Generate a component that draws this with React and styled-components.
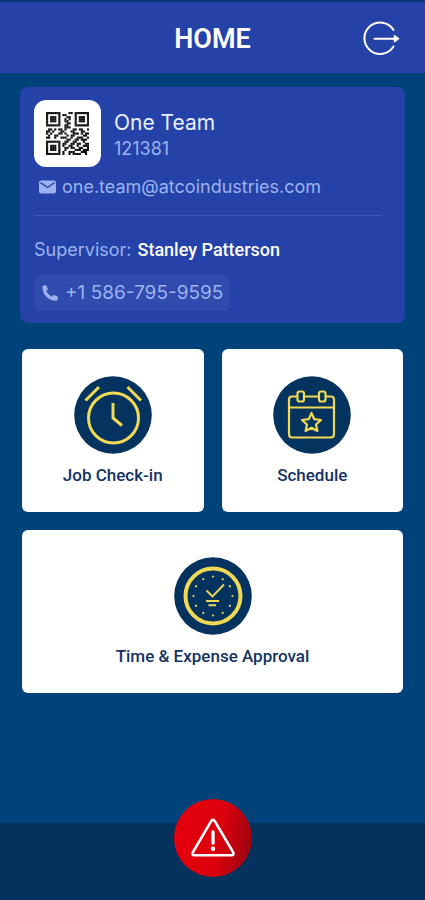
import React from "react";
import styled, { createGlobalStyle } from "styled-components";

const color = {
  page: "#00437b",
  panel: "#2442a8",
  navy: "#04335f",
  footer: "#03325d",
  yellow: "#f0da55",
  muted: "#9db2f0",
};

const GlobalStyle = createGlobalStyle`
  *, *::before, *::after { box-sizing: border-box; }
  body { margin: 0; background: ${color.page}; font-family: Roboto, "Liberation Sans", sans-serif; }
  button { font: inherit; color: inherit; border: 0; padding: 0; cursor: pointer; }
  h1, h2, p { margin: 0; font-weight: inherit; }
`;

const Screen = styled.div`
  min-height: 100vh;
  display: flex;
  flex-direction: column;
  background: ${color.page};
  border-top: 2px solid #053a78;
`;

const Header = styled.header`
  height: 71px;
  padding: 2px 24px 0;
  display: grid;
  grid-template-columns: 40px 1fr 40px;
  align-items: center;
  background: ${color.panel};
  color: #fff;
`;

const Title = styled.h1`
  grid-column: 2;
  text-align: center;
  font-size: 27px;
  line-height: 32px;
  && { font-weight: 600; }
`;

const IconButton = styled.button`
  width: 40px;
  height: 40px;
  background: none;
  svg { display: block; }
`;

const Main = styled.main`
  flex: 1;
  padding: 14px 20px 40px;
  display: flex;
  flex-direction: column;
  gap: 26px;
`;

const Profile = styled.section`
  padding: 13px 13px 12px 14px;
  border-radius: 8px;
  background: ${color.panel};
  color: ${color.muted};
  font-family: Inter, sans-serif;
`;

const Identity = styled.div`
  display: flex;
  gap: 13px;
`;

const QrTile = styled.div`
  width: 67px;
  height: 67px;
  display: grid;
  place-items: center;
  border-radius: 12px;
  background: #fff;
`;

const Names = styled.div`
  padding-top: 9px;
`;

const Name = styled.h2`
  color: #eaf0ff;
  font-size: 21px;
  line-height: 28px;
`;

const BadgeNumber = styled.p`
  font-size: 18px;
  line-height: 24px;
`;

const ContactLink = styled.a`
  display: inline-flex;
  align-items: center;
  color: inherit;
  text-decoration: none;
  font-size: 18px;
  line-height: 24px;
`;

const EmailLink = styled(ContactLink)`
  gap: 5px;
  margin: 8px 4px 0;
`;

const PhoneLink = styled(ContactLink)`
  gap: 6px;
  height: 36px;
  padding: 0 7px;
  border-radius: 6px;
  background: #2f4bae;
  font-size: 19px;
`;

const Divider = styled.hr`
  margin: 16px 10px 20px 0;
  border: 0;
  border-top: 1px solid #3a57b9;
`;

const Supervisor = styled.p`
  display: flex;
  gap: 6px;
  margin-bottom: 11px;
  font-size: 18px;
  line-height: 28px;
  strong { color: #fff; font-family: Roboto, sans-serif; font-weight: 500; }
`;

const Tiles = styled.nav`
  padding: 0 2px;
  display: grid;
  grid-template-columns: 1fr 1fr;
  gap: 18px;
`;

const Tile = styled.button`
  grid-column: span ${(p) => p.$span || 1};
  height: 163px;
  display: flex;
  flex-direction: column;
  align-items: center;
  justify-content: center;
  gap: 11px;
  border-radius: 6px;
  background: #fff;
  && { color: #14335f; }
  font-size: 17px;
  font-weight: 500;
  line-height: 20px;
`;

const Footer = styled.footer`
  height: 77px;
  display: flex;
  justify-content: center;
  background: ${color.footer};
`;

const AlertButton = styled.button`
  width: 78px;
  height: 78px;
  margin-top: -24px;
  display: grid;
  place-items: center;
  border-radius: 50%;
  background: linear-gradient(100deg, #e6000c 0%, #dc000c 55%, #930611 100%);
`;

const QR_ROWS = [
  "111111100001101111111",
  "100000101100001000001",
  "101110100011001011101",
  "101110100101001011101",
  "101110100110001011101",
  "100000100011001000001",
  "111111100110001111111",
  "000000000111000000000",
  "011010110100011011001",
  "110100011000110001100",
  "101000110100011101011",
  "010011000010110000110",
  "110010011100100111001",
  "000000000011001101110",
  "111111100110011000100",
  "100000101100110110011",
  "101110101001100100111",
  "101110100110110011001",
  "101110100100001110111",
  "100000101001110001110",
  "111111101001011110010",
];

const QrCode = () => (
  <svg width="43" height="43" viewBox="0 0 21 21" role="img" aria-label="QR code">
    {QR_ROWS.map((row, y) =>
      [...row].map((cell, x) =>
        cell === "1" ? <rect key={`${x}-${y}`} x={x} y={y} width="1.05" height="1.05" fill="#111" /> : null
      )
    )}
  </svg>
);

const ExitIcon = () => (
  <svg width="40" height="40" viewBox="0 0 40 40" fill="none" stroke="#fff" strokeWidth="2" strokeLinecap="round">
    <path d="M32.5 11A15.7 15.7 0 1 0 32.5 27.5" />
    <path d="M13.5 19.7H34" />
    <path d="M33.5 16.8L37.5 19.7L33.5 22.6Z" fill="#fff" strokeWidth="1.6" strokeLinejoin="round" />
  </svg>
);

const MailIcon = () => (
  <svg width="19" height="14" viewBox="0 0 19 14">
    <rect x="1" y="0.5" width="17" height="13" rx="2" fill={color.muted} />
    <path d="M2.5 2.7L9.5 7.5L16.5 2.7" fill="none" stroke={color.panel} strokeWidth="1.4" />
  </svg>
);

const PhoneIcon = () => (
  <svg width="18" height="18" viewBox="0 0 18 18" fill={color.muted}>
    <path d="M2.2 1.8L4.5 1.2Q5.2 1 5.5 1.7L6.8 4.8Q7 5.5 6.5 5.9L5.2 7Q7 10.8 10.8 12.7L12 11.3Q12.5 10.8 13.1 11L16.5 12.5Q17.2 12.8 17 13.6L16.3 16Q16.1 16.8 15.3 16.8C7.5 16.8 1.4 10.7 1.4 2.8Q1.4 2 2.2 1.8Z" />
  </svg>
);

const RoundIcon = ({ children }) => (
  <svg width="78" height="78" viewBox="0 0 78 78" fill="none" stroke={color.yellow} aria-hidden="true">
    <circle cx="39" cy="39" r="38.8" fill={color.navy} stroke="none" />
    {children}
  </svg>
);

const AlarmIcon = () => (
  <RoundIcon>
    <g strokeWidth="3">
      <circle cx="39.5" cy="42" r="25" />
      <path d="M39 27V42L48 49.5M11.5 24.5L25 11M53.5 11L67 24.5" />
    </g>
  </RoundIcon>
);

const CalendarIcon = () => (
  <RoundIcon>
    <g strokeWidth="2.2" strokeLinejoin="round">
      <path d="M24.5 20.5H19Q16 20.5 16 23.5V58Q16 61.5 19 61.5H58Q61 61.5 61 58V23.5Q61 20.5 58 20.5H53M31.5 20.5H46M16 31.5H61" />
      <rect x="24.5" y="15.5" width="6.5" height="10" rx="2" />
      <rect x="46" y="15.5" width="6.5" height="10" rx="2" />
      <path d="M38.5 37L41.3 43.2L48 44L43 48.5L44.4 55L38.5 51.7L32.6 55L34 48.5L29 44L35.7 43.2Z" />
    </g>
  </RoundIcon>
);

const TICKS = Array.from({ length: 12 }, (_, i) => i * 30);

const ApprovalIcon = () => (
  <RoundIcon>
    <circle cx="39" cy="39" r="27.5" strokeWidth="4" />
    {TICKS.map((angle) => (
      <circle key={angle} cx="39" cy="19.5" r="1.1" fill={color.yellow} stroke="none" transform={`rotate(${angle} 39 39)`} />
    ))}
    <path d="M32.5 33.5L38.5 39.5L50 27.5M32 44H45M34.5 48.3H42" strokeWidth="1.9" />
  </RoundIcon>
);

const WarningIcon = () => (
  <svg width="46" height="40" viewBox="0 0 46 40" fill="none" stroke="#fff" strokeLinecap="round" strokeLinejoin="round">
    <path d="M21.2 3.1Q23 .6 24.8 3.1L43.2 34.3Q44.3 37.2 41.5 37.2H4.5Q1.7 37.2 2.8 34.3Z" strokeWidth="2.6" />
    <path d="M23 14V25" strokeWidth="3.4" />
    <circle cx="23" cy="30.7" r="2.2" fill="#fff" stroke="none" />
  </svg>
);

export default function App() {
  return (
    <>
      <GlobalStyle />
      <Screen>
        <Header>
          <Title>HOME</Title>
          <IconButton aria-label="Log out"><ExitIcon /></IconButton>
        </Header>
        <Main>
          <Profile>
            <Identity>
              <QrTile><QrCode /></QrTile>
              <Names>
                <Name>One Team</Name>
                <BadgeNumber>121381</BadgeNumber>
              </Names>
            </Identity>
            <EmailLink href="mailto:one.team@atcoindustries.com">
              <MailIcon />one.team@atcoindustries.com
            </EmailLink>
            <Divider />
            <Supervisor><span>Supervisor:</span> <strong>Stanley Patterson</strong></Supervisor>
            <PhoneLink href="tel:+15867959595">
              <PhoneIcon />+1 586-795-9595
            </PhoneLink>
          </Profile>
          <Tiles aria-label="Main menu">
            <Tile><AlarmIcon />Job Check-in</Tile>
            <Tile><CalendarIcon />Schedule</Tile>
            <Tile $span={2}><ApprovalIcon />Time &amp; Expense Approval</Tile>
          </Tiles>
        </Main>
        <Footer>
          <AlertButton aria-label="Emergency alert"><WarningIcon /></AlertButton>
        </Footer>
      </Screen>
    </>
  );
}
